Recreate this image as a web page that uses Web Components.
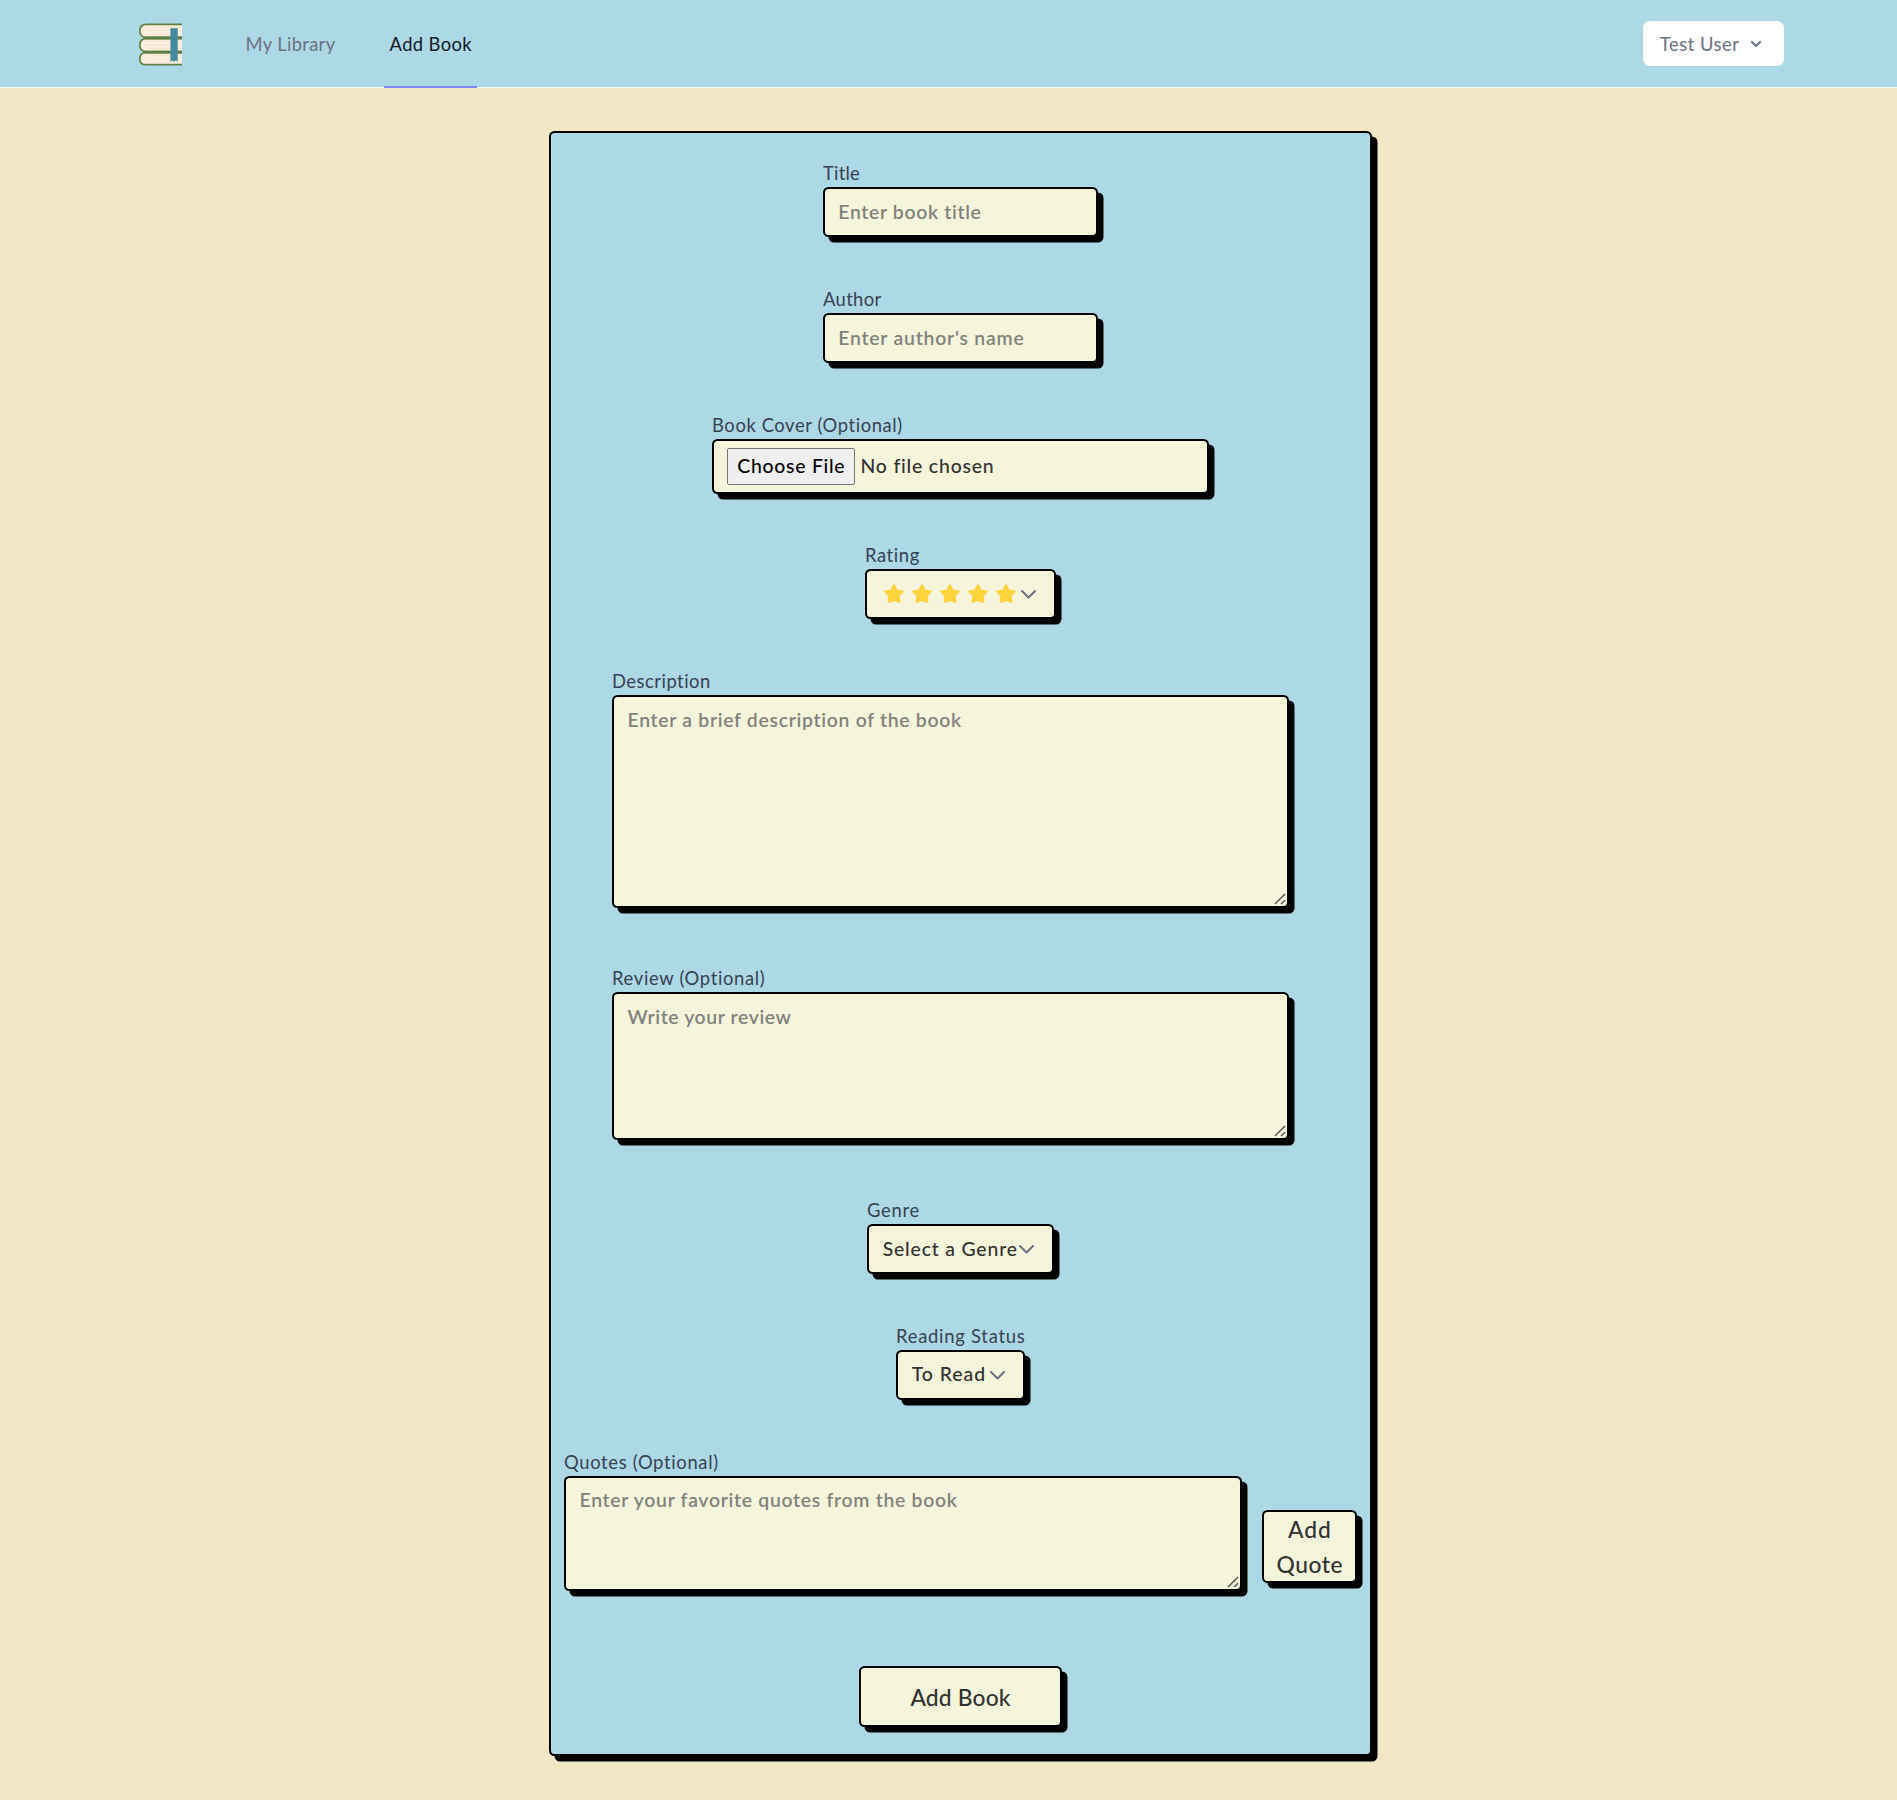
<!DOCTYPE html>
<html lang="en">
<head>
<meta charset="utf-8">
<title>Add Book</title>
<style>
html, body { margin: 0; }
body { background: #f2e8c6; min-height: 1800px; font-family: Lato, "Open Sans", sans-serif; font-size: 18.4px; color: #374151; }
</style>
</head>
<body>
<book-page></book-page>
<script>
const FONT = 'Lato, "Open Sans", sans-serif';
const ctx = document.createElement('canvas').getContext('2d');
// Tracking that makes a run of text occupy the given ink width.
function tracking(text, width, size, weight) {
  ctx.font = `${weight} ${size}px ${FONT}`;
  const m = ctx.measureText(text);
  return (width - m.actualBoundingBoxLeft - m.actualBoundingBoxRight) / (text.length - 1);
}
function define(name, html, setup) {
  customElements.define(name, class extends HTMLElement {
    connectedCallback() {
      if (this.shadowRoot) return;
      const t = document.createElement('template');
      t.innerHTML = typeof html === 'function' ? html(this) : html;
      this.attachShadow({ mode: 'open' }).append(t.content.cloneNode(true));
      if (setup) setup(this, this.shadowRoot);
    }
  });
}
const BOX = `box-sizing:border-box;background:#f5f5dc;border:2px solid #000;border-radius:5.5px;box-shadow:5.5px 5.5px #000;`;

define('fit-text', `<style>:host{display:inline-block;white-space:nowrap}</style><slot></slot>`, (el) => {
  const size = +el.getAttribute('size') || 18.4, weight = el.getAttribute('weight') || 400;
  const ls = tracking(el.textContent, +el.getAttribute('w'), size, weight);
  el.style.fontSize = size + 'px';
  el.style.fontWeight = weight;
  el.style.letterSpacing = ls + 'px';
  el.style.marginRight = -ls + 'px';
});

define('book-logo', `<style>:host{display:block;width:42.700px;height:42.700px}svg{display:block}</style>
<svg width="42.700" height="42.700" viewBox="28 32 129 128">
<g fill="#fbf0df" stroke="#5f7f42" stroke-width="5">
<path d="M160 35.5H50C36 35.5 30.5 45 30.5 55.500S37 75 50 75H160"/>
<path d="M160 78.500H50C36 78.500 30.500 87 30.500 98S37 117.500 50 117.500H160"/>
<path d="M160 121H50C36 121 30.500 130 30.500 140S37 157.500 50 157.500H160"/></g>
<path d="M48 76.700H158M48 119.300H158" stroke="#5f7f42" stroke-width="8.500"/>
<path d="M50 44H156M46 54H156M50 65H156M50 87H156M46 98H156M50 109H156M50 130H156M46 140H156M50 149H156" stroke="#f5e3ce" stroke-width="3"/>
<path d="M123 47H145V149L139 144L134 149L129 144L123 149Z" fill="#418b9f"/></svg>`);

define('nav-tab', `<style>
:host{display:flex;box-sizing:border-box;height:88px;align-items:center;padding:2px 5px 0 5.600px;color:#6b7280;border-bottom:2px solid transparent}
:host([active]){color:#111827;border-bottom-color:#818cf8}</style><slot></slot>`);

define('user-menu', `<style>:host{display:flex;box-sizing:border-box;width:141px;height:45px;padding:0 18px 0 16.800px;align-items:center;justify-content:space-between;background:#fff;border-radius:7px;color:#6b7280}svg{display:block}</style>
<slot></slot><svg width="20" height="20" viewBox="0 0 20 20" fill="currentColor"><path stroke="currentColor" stroke-width=".3" fill-rule="evenodd" d="M5.293 7.293a1 1 0 011.414 0L10 10.586l3.293-3.293a1 1 0 111.414 1.414l-4 4a1 1 0 01-1.414 0l-4-4a1 1 0 010-1.414z"/></svg>`);

define('top-bar', `<style>:host{display:flex;box-sizing:border-box;height:88px;background:#add8e6;border-bottom:1px solid #f3f4f6;padding:0 113px 0 139.300px;justify-content:space-between}
.l{display:flex;align-items:flex-start;height:88px}book-logo{margin:23px 58px 0 0}.t1{width:99px}.t2{width:93px;margin-left:45px}user-menu{margin-top:21px}</style>
<div class="l"><book-logo></book-logo><nav-tab class="t1"><fit-text w="89.500">My Library</fit-text></nav-tab><nav-tab class="t2" active><fit-text w="82.700">Add Book</fit-text></nav-tab></div>
<user-menu><fit-text w="79.500">Test User</fit-text></user-menu>`);

define('form-field', el => `<style>:host{display:flex;flex-direction:column;align-items:flex-start}
label{display:block;height:28px;line-height:28px;color:#374151}</style>
<label><fit-text w="${el.getAttribute('lw')}">${el.getAttribute('label')}</fit-text></label><slot></slot>`);

define('text-input', el => `<style>:host{display:block;position:relative}
input,textarea{display:block;margin:0;${BOX}width:${el.getAttribute('width')}px;height:${el.getAttribute('height')}px;padding:4.500px 13.300px 6.500px;font:600 19.400px ${FONT};color:#323232;outline:none}
textarea{padding:${el.getAttribute('pad') || 9}px 13.500px;line-height:28px;resize:none;overflow:auto}
svg{position:absolute;right:3.500px;bottom:3.500px}
::placeholder{color:#666;opacity:.8}</style>
${el.hasAttribute('multi') ? '<textarea></textarea><svg width="12" height="12" viewBox="0 0 12 12" stroke="#555" stroke-width="1.500" fill="none"><path d="M1 11L11 1M7 11L11 7.300"/></svg>' : '<input type="text">'}`, (el, root) => {
  const c = root.querySelector('input,textarea'), p = el.getAttribute('hint');
  c.placeholder = p;
  c.style.letterSpacing = tracking(p, +el.getAttribute('w'), 19.4, 600) + 'px';
});

define('file-picker', `<style>:host{display:flex;${BOX}width:497px;height:55px;padding:7px 12.500px;color:#323232;gap:6px;align-items:flex-start}
button{box-sizing:border-box;width:128px;height:37px;margin:0;padding:0 0 2px 1px;border:1px solid #767676;border-radius:2px;background:#efefef;color:#000;font-family:inherit}
span{line-height:35px}</style><button><fit-text size="19.400" weight="500" w="107">Choose File</fit-text></button><span><fit-text size="19.400" weight="500" w="131">No file chosen</fit-text></span>`);

define('drop-down', el => `<style>:host{display:flex;${BOX}width:${el.getAttribute('width')}px;height:50px;padding:0 18px 0 13.700px;align-items:center;justify-content:space-between;color:#323232}
svg{display:block;flex:none}::slotted(fit-text){margin-top:-2px}</style><slot></slot>
<svg width="15" height="9" viewBox="0 0 15 9" fill="none" stroke="#6b7280" stroke-width="2" stroke-linecap="round" stroke-linejoin="round"><path d="M1 1L7.500 7.500L14 1"/></svg>`);

define('star-row', `<style>:host{display:flex;gap:8px;margin:-1px 0 0 3.300px}svg{display:block}</style>` +
 `<svg width="20" height="19" viewBox="0 0 20 19"><path d="M10 1.300L12.600 6.600L18.700 7.500L14.400 11.900L15.400 17.700L10 15.900L4.600 17.700L5.600 11.900L1.300 7.500L7.400 6.600Z" fill="#ffd43b" stroke="#ffd43b" stroke-width="2.200" stroke-linejoin="round"/></svg>`.repeat(5));

define('push-button', el => `<style>:host{display:flex;flex-direction:column;align-items:center;justify-content:center;${BOX}width:${el.getAttribute('width')}px;height:${el.getAttribute('height')}px;padding-top:1px;line-height:35px;color:#323232}</style><slot></slot>`);

define('book-form', `<style>:host{display:flex;box-sizing:border-box;flex-direction:column;align-items:center;width:823px;height:1625px;margin:43px 0 0 549px;padding-top:26px;background:#add8e6;border:2px solid #000;border-radius:5.500px;box-shadow:5.500px 5.500px #000}
form-field{margin-bottom:48px}.wide{margin:0 20px 56px 0}.row{display:flex;gap:20px;align-items:flex-end;margin-bottom:75px}.row form-field{margin:0}.row push-button{margin-bottom:8px;padding:0}.status{margin-top:-4px}</style>
<form-field label="Title" lw="36"><text-input width="275" height="50" hint="Enter book title" w="142"></text-input></form-field>
<form-field label="Author" lw="58.500"><text-input width="275" height="50" hint="Enter author's name" w="184.500"></text-input></form-field>
<form-field label="Book Cover (Optional)" lw="190" style="margin-bottom:47px"><file-picker></file-picker></form-field>
<form-field label="Rating" lw="54"><drop-down width="191"><star-row></star-row></drop-down></form-field>
<form-field class="wide" label="Description" lw="97.300"><text-input multi width="677" height="213" hint="Enter a brief description of the book" w="335"></text-input></form-field>
<form-field class="wide" label="Review (Optional)" lw="152.500"><text-input multi width="677" height="148" hint="Write your review" w="165"></text-input></form-field>
<form-field label="Genre" lw="51.500"><drop-down width="187"><fit-text size="19.400" weight="500" w="134">Select a Genre</fit-text></drop-down></form-field>
<form-field label="Reading Status" lw="127.800"><drop-down width="129"><fit-text class="status" size="19.400" weight="500" w="72.500">To Read</fit-text></drop-down></form-field>
<div class="row"><form-field label="Quotes (Optional)" lw="154.500"><text-input multi pad="8" width="678" height="115" hint="Enter your favorite quotes from the book" w="378.500"></text-input></form-field>
<push-button width="95" height="73"><fit-text size="22.800" weight="500" w="42">Add</fit-text><fit-text size="22.800" weight="500" w="65">Quote</fit-text></push-button></div>
<push-button width="203" height="61"><fit-text size="22.800" weight="500" w="100.500">Add Book</fit-text></push-button>`);

define('book-page', `<style>:host{display:block}</style><top-bar></top-bar><book-form></book-form>`);
</script>
</body>
</html>
